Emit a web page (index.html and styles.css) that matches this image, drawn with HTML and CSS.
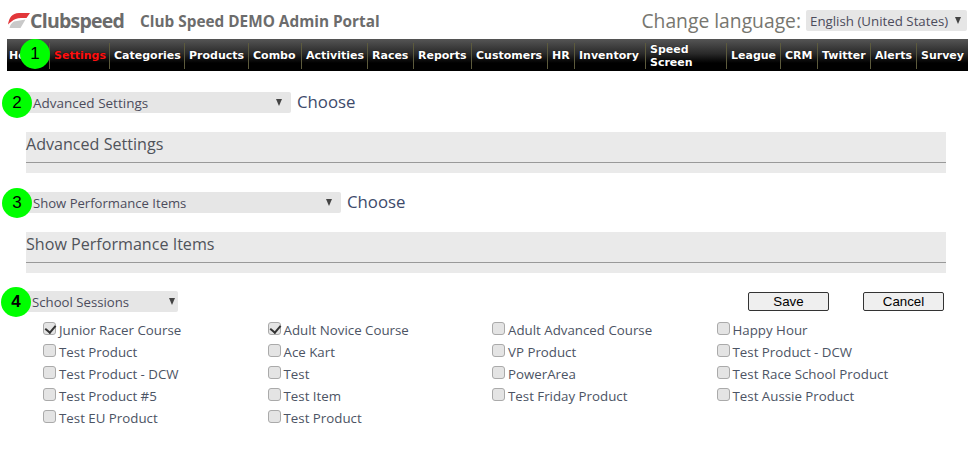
FILE: index.html
```html
<!DOCTYPE html>
<html lang="en">
<head>
<meta charset="utf-8">
<title>Club Speed DEMO Admin Portal</title>
<link rel="stylesheet" href="styles.css">
</head>
<body>
<header class="top">
  <div class="logo">
    <svg class="logo-mark" width="22" height="16" viewBox="0 0 22 16" aria-hidden="true">
      <path d="M0 11.5 C1 5 4 0 11 0 L22 0 L18.5 5 L13 5 C9 5 6 6.5 3.5 8.5 C2 9.5 1 10.5 0 11.5Z" fill="#e2373a"/>
      <path d="M6 8.5 L17.5 6.5 L12.5 15 L1.5 15 C2 12 3.5 10 6 8.5Z" fill="#c9c9c9"/>
    </svg>
    <span class="logo-text">Clubspeed</span>
  </div>
  <h1 class="portal">Club Speed DEMO Admin Portal</h1>
  <div class="lang">
    <span class="lang-label">Change language:</span>
    <div class="sel sel-lang"><span>English (United States)</span><i class="caret"></i></div>
  </div>
</header>
<nav class="nav">
  <a class="w-home">Home</a>
  <a class="active w-settings">Settings</a>
  <a class="w-categories">Categories</a>
  <a class="w-products">Products</a>
  <a class="w-combo">Combo</a>
  <a class="w-activities">Activities</a>
  <a class="w-races">Races</a>
  <a class="w-reports">Reports</a>
  <a class="w-customers">Customers</a>
  <a class="w-hr">HR</a>
  <a class="w-inventory">Inventory</a>
  <a class="w-speed">Speed Screen</a>
  <a class="w-league">League</a>
  <a class="w-crm">CRM</a>
  <a class="w-twitter">Twitter</a>
  <a class="w-alerts">Alerts</a>
  <a class="w-survey">Survey</a>
</nav>
<main class="content">
  <div class="choose-row row-a">
    <div class="sel sel-a"><span>Advanced Settings</span><i class="caret"></i></div>
    <span class="choose">Choose</span>
  </div>
  <section class="panel"><h2>Advanced Settings</h2></section>
  <div class="choose-row row-b">
    <div class="sel sel-b"><span>Show Performance Items</span><i class="caret"></i></div>
    <span class="choose">Choose</span>
  </div>
  <section class="panel"><h2>Show Performance Items</h2></section>
  <div class="actions">
    <div class="sel sel-c"><span>School Sessions</span><i class="caret"></i></div>
    <div class="buttons">
      <button type="button" class="btn">Save</button>
      <button type="button" class="btn">Cancel</button>
    </div>
  </div>
  <div class="checks">
    <label><input type="checkbox" checked>Junior Racer Course</label>
    <label><input type="checkbox" checked>Adult Novice Course</label>
    <label><input type="checkbox">Adult Advanced Course</label>
    <label><input type="checkbox">Happy Hour</label>
    <label><input type="checkbox">Test Product</label>
    <label><input type="checkbox">Ace Kart</label>
    <label><input type="checkbox">VP Product</label>
    <label><input type="checkbox">Test Product - DCW</label>
    <label><input type="checkbox">Test Product - DCW</label>
    <label><input type="checkbox">Test</label>
    <label><input type="checkbox">PowerArea</label>
    <label><input type="checkbox">Test Race School Product</label>
    <label><input type="checkbox">Test Product #5</label>
    <label><input type="checkbox">Test Item</label>
    <label><input type="checkbox">Test Friday Product</label>
    <label><input type="checkbox">Test Aussie Product</label>
    <label><input type="checkbox">Test EU Product</label>
    <label><input type="checkbox">Test Product</label>
  </div>
</main>
<span class="badge b1">1</span>
<span class="badge b2">2</span>
<span class="badge b3">3</span>
<span class="badge b4">4</span>
</body>
</html>
```

FILE: styles.css
```css
* { box-sizing: border-box; }
html, body { margin: 0; padding: 0; }
body {
  position: relative;
  height: 457px;
  overflow: hidden;
  background: #fff;
  color: #44506a;
  font-family: "Open Sans", sans-serif;
}
.top {
  height: 39px;
  display: flex;
  align-items: center;
  padding: 2px 1px 0 8px;
}
.logo { display: flex; align-items: center; width: 132px; }
.logo-text {
  font-size: 19.5px;
  font-weight: 700;
  letter-spacing: -0.75px;
  color: #6b6b6b;
}
.portal {
  margin: 0;
  font-size: 15.35px;
  font-weight: 700;
  color: #6c6c6c;
}
.lang { margin-left: auto; display: flex; align-items: center; gap: 5px; }
.lang-label { font-size: 19.3px; color: #77766f; }
.sel {
  display: flex;
  align-items: center;
  justify-content: space-between;
  height: 21px;
  padding-top: 1px;
  background: #e6e6e6;
  border-radius: 2px;
  color: #4c4c5c;
  font-size: 13.1px;
}
.caret {
  width: 0;
  height: 0;
  margin-top: -2px;
  border-left: 3.5px solid transparent;
  border-right: 3.5px solid transparent;
  border-top: 7px solid #444;
}
.sel-lang { width: 161px; padding: 1px 6px 0 4px; font-size: 13.3px; }
.nav {
  margin-left: 7px;
  height: 32px;
  display: flex;
  align-items: center;
  background: linear-gradient(#555 0, #2a2a2a 45%, #000 75%, #000 100%);
}
.nav a {
  display: flex;
  align-items: center;
  flex: none;
  height: 26px;
  margin-top: 1px;
  padding-left: 4px;
  border-right: 1px solid #5c5a3c;
  color: #fff;
  font-family: "DejaVu Sans", sans-serif;
  font-size: 11px;
  font-weight: 700;
  line-height: 13px;
  text-shadow: 0 0 1px #000;
}
.nav a:last-child { border-right: 0; }
.nav a.active { color: #f11; }
.w-home { width: 43px; padding-left: 2px !important; }
.w-settings { width: 60px; }
.w-categories { width: 75px; }
.w-products { width: 64px; }
.w-combo { width: 53px; }
.w-activities { width: 66px; }
.w-races { width: 46px; }
.w-reports { width: 58px; }
.w-customers { width: 76px; }
.w-hr { width: 27px; }
.w-inventory { width: 71px; }
.w-speed { width: 81px; }
.w-league { width: 54px; }
.w-crm { width: 37px; }
.w-twitter { width: 53px; }
.w-alerts { width: 46px; }
.w-survey { width: 51px; }
.content { padding: 21px 22px 0 26px; }
.choose-row { display: flex; align-items: center; gap: 6px; height: 21px; }
.sel-a { width: 265px; padding: 1px 9px 0 7px; font-size: 13.5px; }
.sel-b { width: 315px; padding: 1px 9px 0 7px; }
.choose { margin-top: -2px; font-size: 16.8px; color: #3d4a6a; }
.panel {
  height: 41px;
  margin-top: 19px;
  background: #eaeaea;
}
.panel h2 {
  margin: 0;
  height: 31px;
  border-bottom: 1px solid #999;
  font-size: 16.1px;
  font-weight: 400;
  line-height: 24px;
  color: #50535a;
}
.row-b { margin-top: 19px; }
.actions {
  display: flex;
  align-items: center;
  justify-content: space-between;
  height: 21px;
  margin-top: 18px;
}
.sel-c { width: 152px; padding: 1px 3px 0 6px; font-size: 13.2px; }
.buttons { display: flex; gap: 34px; margin-right: 2px; }
.btn {
  width: 81px;
  height: 19px;
  padding: 0;
  border: 1px solid #333;
  border-radius: 2px;
  background: #efefef;
  color: #000;
  font-family: "Liberation Sans", sans-serif;
  font-size: 13.3px;
  line-height: 15px;
}
.checks {
  display: grid;
  grid-template-columns: repeat(4, 224.5px);
  grid-auto-rows: 22px;
  margin: 7px 0 0 17px;
}
.checks label {
  display: flex;
  align-items: center;
  font-size: 13.3px;
  color: #4c5464;
}
.checks input {
  appearance: none;
  position: relative;
  width: 13px;
  height: 13px;
  margin: -3px 3px 0 0;
  background: #e4e4e4;
  border: 1px solid #aaa;
  border-radius: 3px;
}
.checks input:checked::after {
  content: "";
  position: absolute;
  left: 3px;
  top: 0;
  width: 5px;
  height: 8px;
  border: solid #333;
  border-width: 0 2px 2px 0;
  transform: rotate(40deg);
}
.badge {
  position: absolute;
  width: 30px;
  height: 30px;
  border-radius: 50%;
  background: #0f0;
  color: #000;
  font-family: "Liberation Sans", sans-serif;
  font-size: 17px;
  line-height: 30px;
  text-align: center;
}
.b1 { left: 20px; top: 39px; }
.b2 { left: 2px; top: 88px; }
.b3 { left: 2px; top: 188px; }
.b4 { left: 1px; top: 287px; font-weight: 700; }
```
